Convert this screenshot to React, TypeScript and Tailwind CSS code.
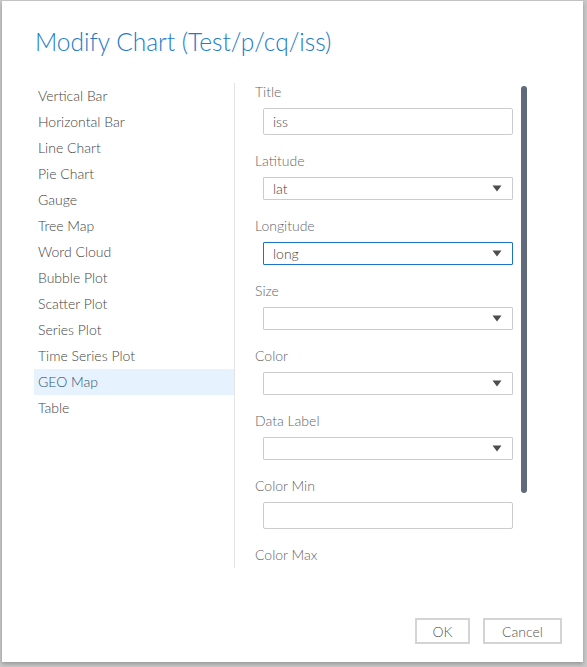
import React from "react";

const items = [
  "Vertical Bar",
  "Horizontal Bar",
  "Line Chart",
  "Pie Chart",
  "Gauge",
  "Tree Map",
  "Word Cloud",
  "Bubble Plot",
  "Scatter Plot",
  "Series Plot",
  "Time Series Plot",
  "GEO Map",
  "Table",
];

function Arrow() {
  return (
    <svg width="10" height="7" viewBox="0 0 10 7" className="shrink-0">
      <path d="M0.5 0.5 L9.5 0.5 L5 6.5 Z" fill="#4d4d4d" />
    </svg>
  );
}

function Label({ children }: { children: React.ReactNode }) {
  return <div className="h-[18px] leading-[18px] text-[14px] text-[#666]">{children}</div>;
}

function Input({ value }: { value?: string }) {
  return (
    <div className="mt-[7px] ml-[8px] w-[250px] h-[27px] border border-[#ccc] rounded-[2px] flex items-center px-[9px] text-[14px] text-[#444]">
      {value}
    </div>
  );
}

function Select({ value, focused }: { value?: string; focused?: boolean }) {
  return (
    <div
      className={
        "mt-[7px] ml-[8px] w-[250px] h-[23px] border rounded-[1px] flex items-center justify-between pl-[9px] pr-[10px] text-[14px] text-[#444] " +
        (focused ? "border-[#1a73c8]" : "border-[#ccc]")
      }
    >
      <span>{value}</span>
      <Arrow />
    </div>
  );
}

export default function App() {
  return (
    <div
      className="w-[587px] h-[667px] bg-[#c8c8c8] overflow-hidden pt-[1px] pl-[2px] font-light"
      style={{ fontFamily: "Lato, 'Open Sans', sans-serif" }}
    >
      <div className="w-[581px] h-[661px] bg-white shadow-[0_2px_4px_rgba(0,0,0,0.25)] flex flex-col">
        <div className="h-[82px] pl-[33px] pt-[26px] text-[24.5px] leading-[30px] text-[#1d7bc9]">
          Modify Chart (Test/p/cq/iss)
        </div>
        <div className="flex h-[485px]">
          <div className="ml-[32px] w-[200px] flex flex-col">
            {items.map((it) => (
              <div
                key={it}
                className={
                  "h-[26px] leading-[26px] pl-[4px] text-[14px] " +
                  (it === "GEO Map" ? "bg-[#e6f2fd] text-[#2f5373]" : "text-[#444]")
                }
              >
                {it}
              </div>
            ))}
          </div>
          <div className="w-px bg-[#e3e3e3]" />
          <div className="relative flex-1 overflow-hidden pl-[20px]">
            <div className="flex flex-col gap-[17px]">
              <div>
                <Label>Title</Label>
                <Input value="iss" />
              </div>
              <div>
                <Label>Latitude</Label>
                <Select value="lat" />
              </div>
              <div>
                <Label>Longitude</Label>
                <Select value="long" focused />
              </div>
              <div>
                <Label>Size</Label>
                <Select />
              </div>
              <div>
                <Label>Color</Label>
                <Select />
              </div>
              <div>
                <Label>Data Label</Label>
                <Select />
              </div>
              <div>
                <Label>Color Min</Label>
                <Input />
              </div>
              <div>
                <Label>Color Max</Label>
                <Input />
              </div>
            </div>
            <div className="absolute left-[286px] top-[3px] w-[6px] h-[407px] rounded-[3px] bg-[#5f6b7c]" />
          </div>
        </div>
        <div className="flex justify-end gap-[13px] pr-[21px] pt-[50px]">
          <button className="w-[55px] h-[26px] border-2 border-[#d4d4d4] text-[14px] text-[#555] bg-white">
            OK
          </button>
          <button className="w-[79px] h-[26px] border-2 border-[#d4d4d4] text-[14px] text-[#555] bg-white">
            Cancel
          </button>
        </div>
      </div>
    </div>
  );
}
